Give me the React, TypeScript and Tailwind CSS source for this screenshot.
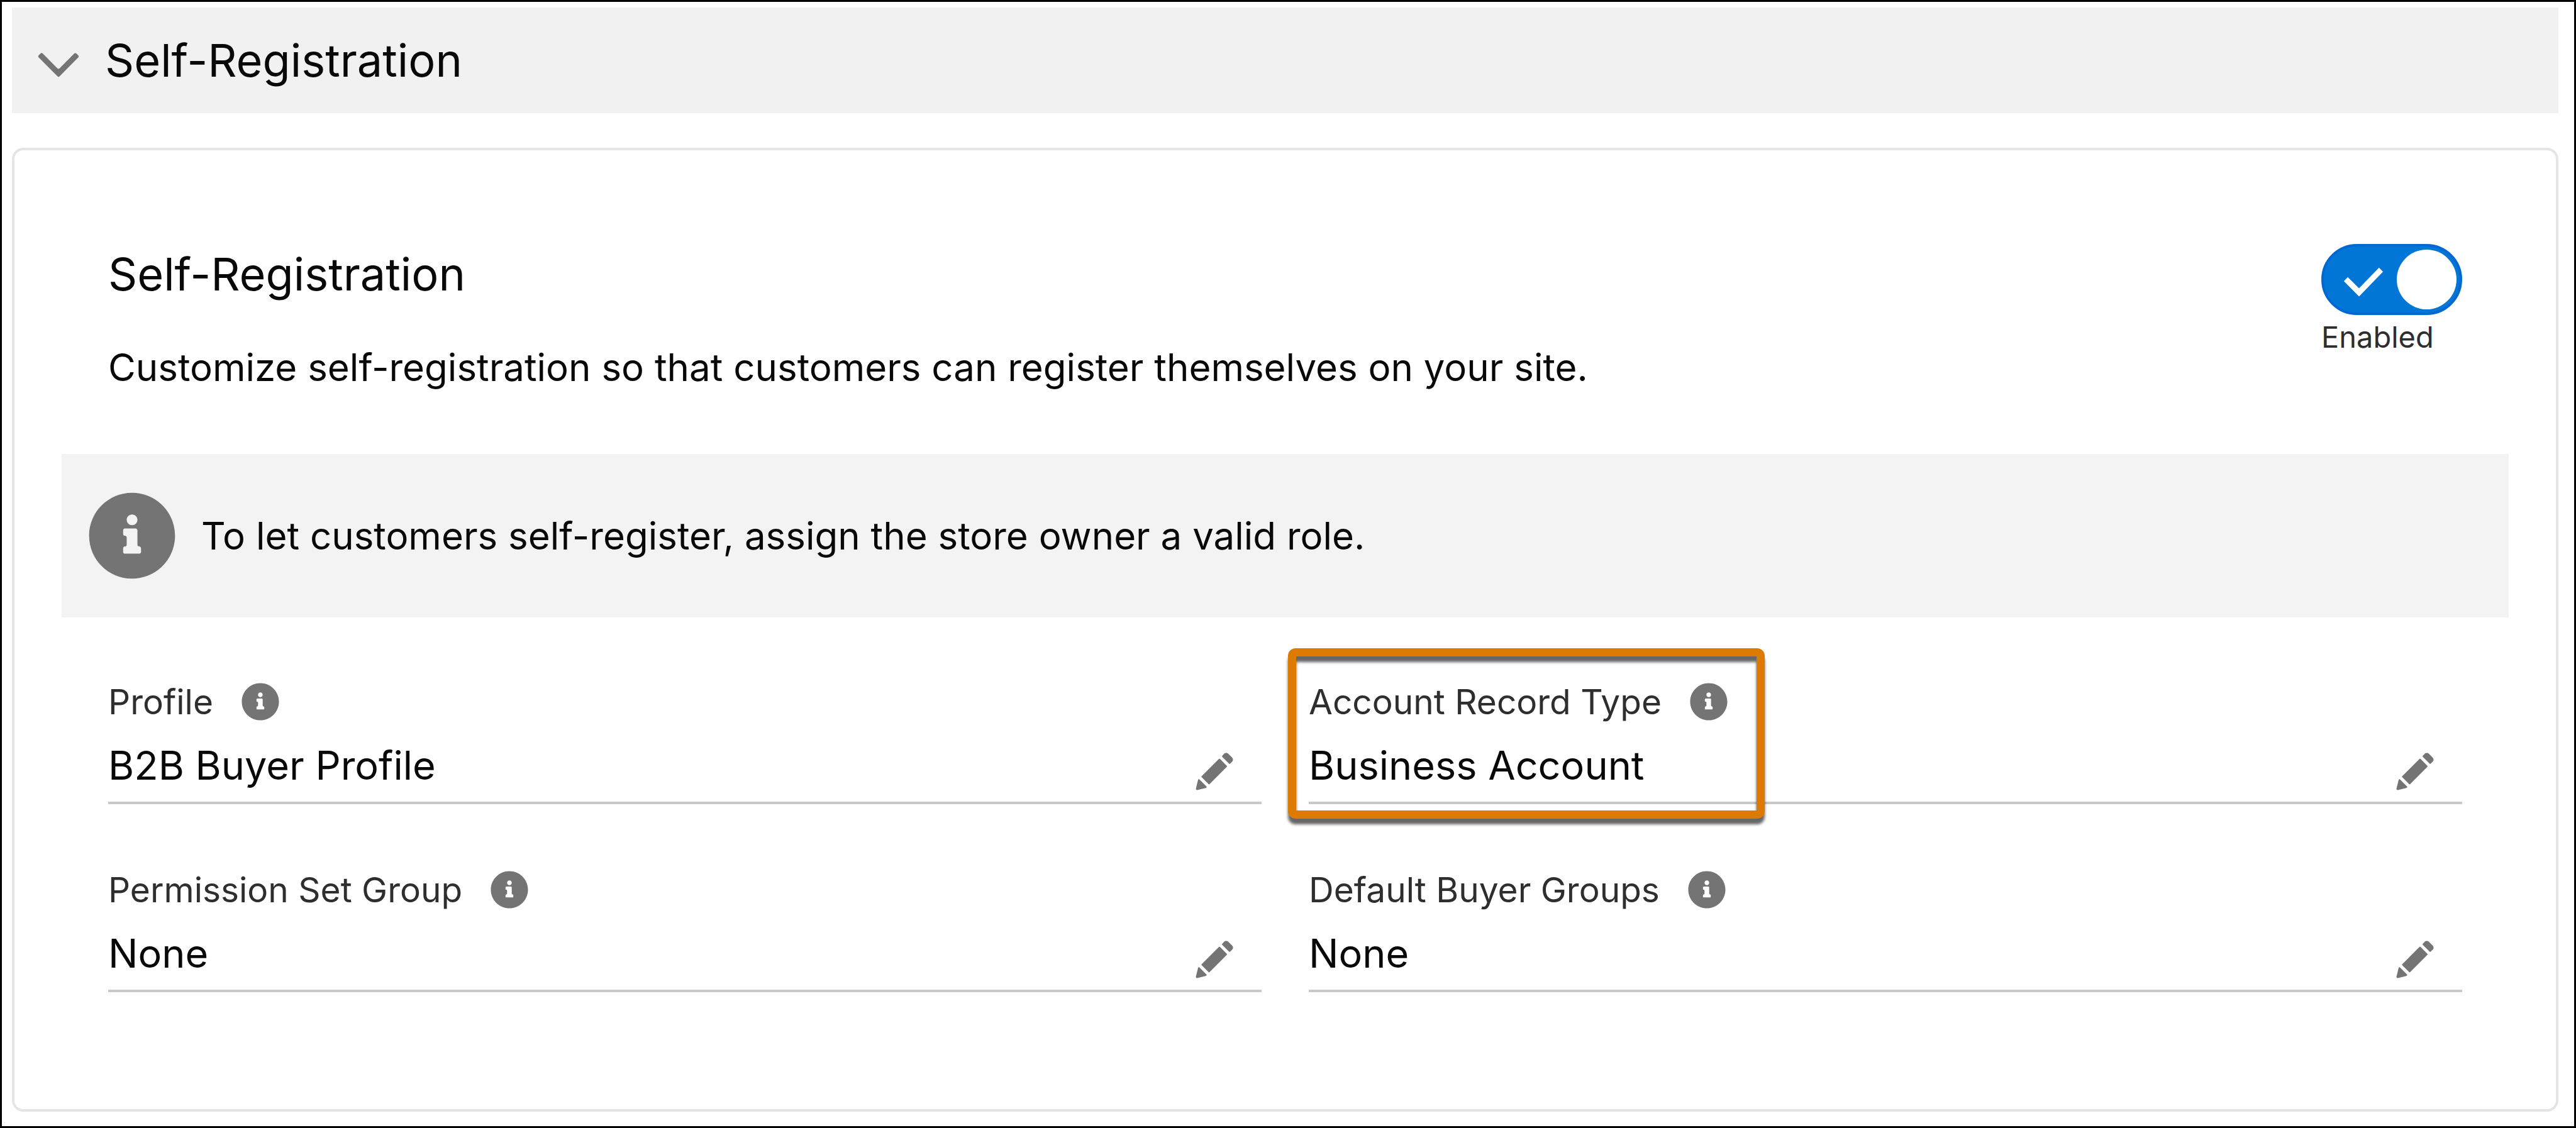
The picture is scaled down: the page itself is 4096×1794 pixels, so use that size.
import React, { useState } from 'react';

interface Setting {
  id: string;
  label: string;
  value: string;
  highlighted?: boolean;
}

const settings: Setting[] = [
  { id: 'profile', label: 'Profile', value: 'B2B Buyer Profile' },
  { id: 'record-type', label: 'Account Record Type', value: 'Business Account', highlighted: true },
  { id: 'permission-set', label: 'Permission Set Group', value: 'None' },
  { id: 'buyer-groups', label: 'Default Buyer Groups', value: 'None' },
];

function InfoIcon({ className }: { className?: string }) {
  return (
    <svg viewBox="0 0 52 52" fill="currentColor" aria-hidden="true" className={className}>
      <path d="M26 2C12.7 2 2 12.7 2 26s10.7 24 24 24 24-10.7 24-24S39.3 2 26 2zm0 12.1c1.7 0 3 1.3 3 3s-1.3 3-3 3-3-1.3-3-3 1.3-3 3-3zm5 21c0 .5-.4.9-1 .9h-8c-.5 0-1-.3-1-.9v-2c0-.5.4-1.1 1-1.1.5 0 1-.3 1-.9v-4c0-.5-.4-1.1-1-1.1-.5 0-1-.3-1-.9v-2c0-.5.4-1.1 1-1.1h6c.5 0 1 .5 1 1.1v8c0 .5.4.9 1 .9.5 0 1 .5 1 1.1v2z" />
    </svg>
  );
}

function PencilIcon({ className }: { className?: string }) {
  return (
    <svg viewBox="0 0 52 52" fill="currentColor" aria-hidden="true" className={className}>
      <path d="M9.5 33.4l8.9 8.9c.4.4 1 .4 1.4 0L42 20c.4-.4.4-1 0-1.4l-8.8-8.8c-.4-.4-1-.4-1.4 0L9.5 32.1c-.4.4-.4 1 0 1.3zM36.1 5.7c-.4.4-.4 1 0 1.4l8.8 8.8c.4.4 1 .4 1.4 0l2.5-2.5c1.6-1.5 1.6-3.9 0-5.5l-4.7-4.7c-1.6-1.6-4.1-1.6-5.7 0l-2.3 2.5zM2.1 48.2c-.2 1 .7 1.9 1.7 1.7l10.9-2.6c.4-.1.7-.3.9-.5l.2-.2c.2-.2.3-.9-.1-1.3l-9-9c-.4-.4-1.1-.3-1.3-.1l-.2.2c-.3.3-.4.6-.5.9L2.1 48.2z" />
    </svg>
  );
}

function ChevronIcon({ className }: { className?: string }) {
  return (
    <svg viewBox="0 -5 52 52" fill="currentColor" aria-hidden="true" className={className}>
      <path d="M47.6 17.8L27.1 38.5c-.6.6-1.5.6-2.1 0L4.4 17.8c-.6-.6-.6-1.6 0-2.2l2.2-2.2c.6-.6 1.6-.6 2.2 0l16.1 16.3c.6.6 1.6.6 2.2 0l16.1-16.2c.6-.6 1.6-.6 2.2 0l2.2 2.2c.6.6.6 1.5 0 2.1z" />
    </svg>
  );
}

function SettingField({ setting }: { setting: Setting }) {
  return (
    <div className="relative">
      <div className="flex h-16 items-center gap-[43px]">
        <span className="text-[55px] leading-[66px] text-[#2e2e2e]">{setting.label}</span>
        <button type="button" aria-label={`Help for ${setting.label}`} className="text-[#747474]">
          <InfoIcon className="size-16" />
        </button>
      </div>
      <div className="mt-[27px] flex items-end justify-between border-b-4 border-[#c9c9c9] pb-4 pr-[43px]">
        <span className="text-[63px] leading-[84px]">{setting.value}</span>
        <button type="button" aria-label={`Edit ${setting.label}`} className="text-[#747474]">
          <PencilIcon className="size-16" />
        </button>
      </div>
      {setting.highlighted && (
        <div className="pointer-events-none absolute -left-[33px] -top-[53px] h-[271px] w-[758px] rounded-xl border-[13px] border-[#dd7a01] drop-shadow-[0_9px_2px_rgba(0,0,0,0.6)]" />
      )}
    </div>
  );
}

export default function App() {
  const [open, setOpen] = useState(true);
  const [enabled, setEnabled] = useState(true);

  return (
    <main className="flex min-h-screen flex-col border-[3px] border-black bg-white pb-[23px] pl-4 pr-[25px] pt-[9px] font-['Inter','Liberation_Sans',sans-serif] text-[#080808]">
      <h2>
        <button
          type="button"
          aria-expanded={open}
          onClick={() => setOpen(!open)}
          className="flex h-[168px] w-full items-center gap-9 bg-[#f1f1f1] pl-9 text-left"
        >
          <ChevronIcon className="size-[76px] text-[#747474]" />
          <span className="text-[72px] leading-[96px]">Self-Registration</span>
        </button>
      </h2>

      {open && (
        <section className="mt-[55px] flex-1 rounded-[18px] border-4 border-[#e5e5e5] px-[75px] pt-[149px]">
          <div className="flex items-start justify-between px-[74px]">
            <div>
              <h3 className="text-[72px] leading-[96px]">Self-Registration</h3>
              <p className="mt-16 text-[60px] leading-[72px]">
                Customize self-registration so that customers can register themselves on your site.
              </p>
            </div>

            <label className="block w-56 cursor-pointer">
              <input
                type="checkbox"
                role="switch"
                className="peer sr-only"
                checked={enabled}
                onChange={e => setEnabled(e.target.checked)}
              />
              <span className="flex h-[113px] flex-row-reverse items-center justify-between rounded-full border-4 border-[#0068d2] bg-[#0176d6] pl-8 pr-[5px]">
                <span className="size-[95px] rounded-full bg-white" />
                <svg viewBox="0 0 62 54" fill="none" stroke="white" strokeWidth="9" className="h-[54px] w-[62px]">
                  <path d="M3 26L24 47L59 11" />
                </svg>
              </span>
              <span className="mt-2 block text-[47px] leading-[54px] text-[#2e2e2e]">
                {enabled ? 'Enabled' : 'Disabled'}
              </span>
            </label>
          </div>

          <div role="status" className="mt-[102px] flex h-[260px] items-center gap-9 bg-[#f3f3f3] pl-[38px]">
            <InfoIcon className="size-[148px] text-[#747474]" />
            <p className="text-[60px] leading-[72px]">To let customers self-register, assign the store owner a valid role.</p>
          </div>

          <div className="mt-[102px] grid grid-cols-2 gap-x-[75px] gap-y-[104px] px-[74px]">
            {settings.map(setting => (
              <SettingField key={setting.id} setting={setting} />
            ))}
          </div>
        </section>
      )}
    </main>
  );
}
